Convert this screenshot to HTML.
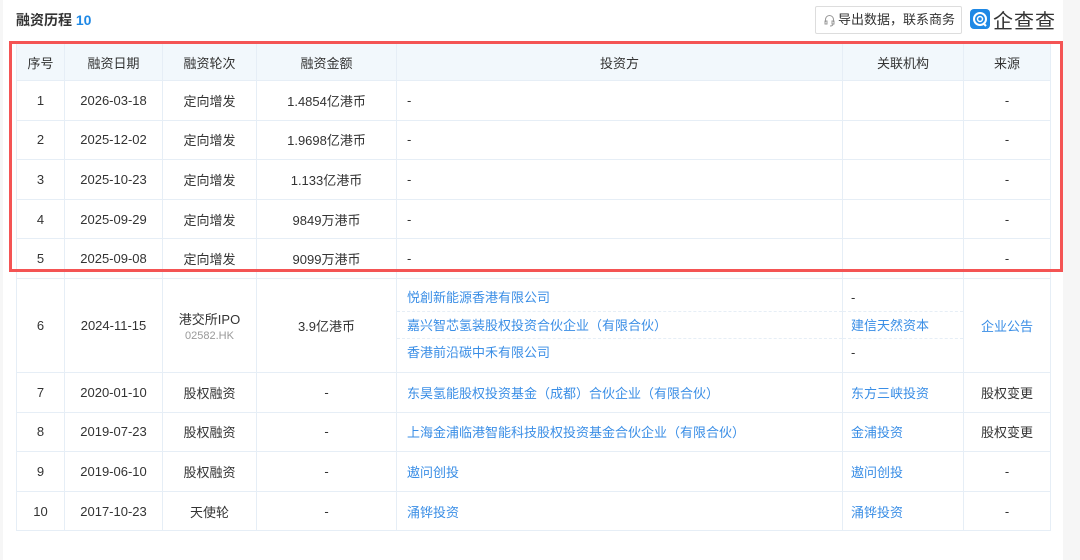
<!DOCTYPE html>
<html><head><meta charset="utf-8"><style>
*{margin:0;padding:0;box-sizing:border-box}
body{width:1080px;height:560px;background:#fff;position:relative;overflow:hidden;font-family:"Liberation Sans","Noto Sans CJK SC",sans-serif;font-size:13px;color:#333}
.gr{position:absolute;top:0;bottom:0;right:0;width:17px;background:#f6f6f6}
.gl{position:absolute;top:0;bottom:0;left:0;width:3px;background:#f6f6f6}
.title{position:absolute;left:16px;top:10px;font-size:14px;font-weight:bold;color:#333}
.title b{color:#1e88e5}
.btn{position:absolute;left:815px;top:6px;width:147px;height:28px;border:1px solid #ddd;border-radius:2px;font-size:13px;line-height:26px;padding-left:22px;color:#333}
.logo{position:absolute;left:970px;top:7px;height:24px;display:flex;align-items:center;font-size:20px;color:#333;letter-spacing:1px}
.logo i{display:inline-block;width:20px;height:20px;background:#1e88e5;border-radius:4px;margin-right:3px;position:relative}
table{position:absolute;left:16px;top:43px;width:1034px;border-collapse:collapse;table-layout:fixed}
td,th{border:1px solid #e6eef6;text-align:center;font-weight:normal;height:39.6px;padding:0}
th{background:#f2f8fc;height:37px}
td.l{text-align:left;padding-left:10px}
a{color:#3a8ee6;text-decoration:none}
.sub{display:block;height:27.5px;line-height:27px;border-bottom:1px dashed #e6eef6}
.sub:last-child{border-bottom:none}
.hk{color:#999;font-size:11px;display:block;margin-top:2px}
.red{position:absolute;left:9px;top:41px;width:1054px;height:231px;border:3px solid #f45454}
</style></head><body>
<div class="gl"></div><div class="gr"></div>
<div class="title">融资历程 <b>10</b></div>
<div class="btn"><svg style="position:absolute;left:8px;top:7px" width="11" height="13" viewBox="0 0 11 13"><path d="M1.5 8V5.5a4 4 0 0 1 8 0V8M1 7h2v3H1zM8 7h2v3H8zM9 10c0 1.5-1.5 2-3 2" fill="none" stroke="#999" stroke-width="1"/></svg>导出数据，联系商务</div>
<div class="logo"><i><svg width="20" height="20" viewBox="0 0 20 20"><circle cx="10" cy="10" r="6" fill="none" stroke="#fff" stroke-width="2"/><circle cx="10" cy="10" r="2.5" fill="none" stroke="#fff" stroke-width="1.5"/><path d="M13 14l3 3" stroke="#fff" stroke-width="2"/></svg></i>企查查</div>
<table>
<colgroup><col style="width:48px"><col style="width:98px"><col style="width:94px"><col style="width:140px"><col style="width:446px"><col style="width:121px"><col style="width:87px"></colgroup>
<tr><th>序号</th><th>融资日期</th><th>融资轮次</th><th>融资金额</th><th>投资方</th><th>关联机构</th><th>来源</th></tr>
<tr><td>1</td><td>2026-03-18</td><td>定向增发</td><td>1.4854亿港币</td><td class="l">-</td><td></td><td>-</td></tr>
<tr><td>2</td><td>2025-12-02</td><td>定向增发</td><td>1.9698亿港币</td><td class="l">-</td><td></td><td>-</td></tr>
<tr><td>3</td><td>2025-10-23</td><td>定向增发</td><td>1.133亿港币</td><td class="l">-</td><td></td><td>-</td></tr>
<tr><td>4</td><td>2025-09-29</td><td>定向增发</td><td>9849万港币</td><td class="l">-</td><td></td><td>-</td></tr>
<tr><td>5</td><td>2025-09-08</td><td>定向增发</td><td>9099万港币</td><td class="l">-</td><td></td><td>-</td></tr>
<tr><td style="height:94px">6</td><td>2024-11-15</td><td>港交所IPO<span class="hk">02582.HK</span></td><td>3.9亿港币</td>
<td class="l" style="padding:4px 0 4px 0"><span class="sub" style="padding-left:10px"><a>悦創新能源香港有限公司</a></span><span class="sub" style="padding-left:10px"><a>嘉兴智芯氢装股权投资合伙企业（有限合伙）</a></span><span class="sub" style="padding-left:10px"><a>香港前沿碳中禾有限公司</a></span></td>
<td class="l" style="padding:4px 0 4px 0"><span class="sub" style="padding-left:8px">-</span><span class="sub" style="padding-left:8px"><a>建信天然资本</a></span><span class="sub" style="padding-left:8px">-</span></td>
<td><a>企业公告</a></td></tr>
<tr><td>7</td><td>2020-01-10</td><td>股权融资</td><td>-</td><td class="l"><a>东昊氢能股权投资基金（成都）合伙企业（有限合伙）</a></td><td class="l" style="padding-left:8px"><a>东方三峡投资</a></td><td>股权变更</td></tr>
<tr><td>8</td><td>2019-07-23</td><td>股权融资</td><td>-</td><td class="l"><a>上海金浦临港智能科技股权投资基金合伙企业（有限合伙）</a></td><td class="l" style="padding-left:8px"><a>金浦投资</a></td><td>股权变更</td></tr>
<tr><td>9</td><td>2019-06-10</td><td>股权融资</td><td>-</td><td class="l"><a>遨问创投</a></td><td class="l" style="padding-left:8px"><a>遨问创投</a></td><td>-</td></tr>
<tr><td>10</td><td>2017-10-23</td><td>天使轮</td><td>-</td><td class="l"><a>涌铧投资</a></td><td class="l" style="padding-left:8px"><a>涌铧投资</a></td><td>-</td></tr>
</table>
<div class="red"></div>
</body></html>
